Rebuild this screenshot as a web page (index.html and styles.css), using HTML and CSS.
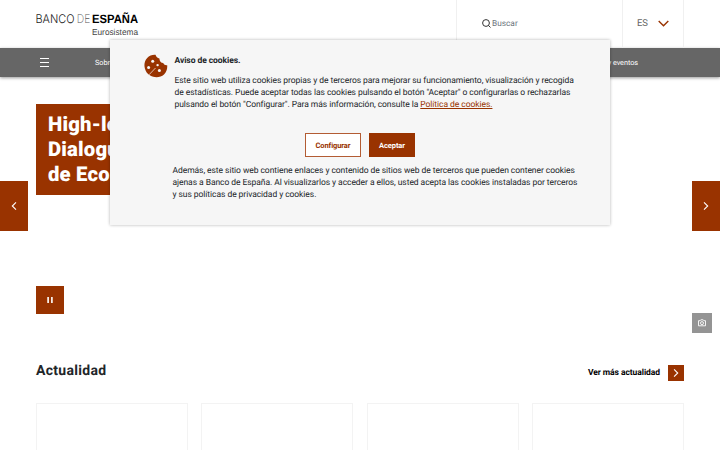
FILE: index.html
```html
<!DOCTYPE html>
<html lang="es">
<head>
    <meta charset="UTF-8">
    <meta name="viewport" content="width=device-width, initial-scale=1.0">
    <title>Banco de España</title>
    <link rel="stylesheet" href="styles.css">
</head>
<body>

<header class="header">
    <a class="logo" href="#">
        <svg width="104" height="26" viewBox="0 0 104 26">
            <text class="logo-light" x="-.5" y="12.7" textLength="39" lengthAdjust="spacingAndGlyphs">BANCO</text>
            <text class="logo-thin" x="40.8" y="12.7" textLength="13.5" lengthAdjust="spacingAndGlyphs">DE</text>
            <text class="logo-bold" x="56" y="12.7" textLength="46" lengthAdjust="spacingAndGlyphs">ESPAÑA</text>
            <text class="logo-sub" x="56" y="24.7" textLength="46" lengthAdjust="spacingAndGlyphs">Eurosistema</text>
        </svg>
    </a>
    <div class="search">
        <svg width="9" height="9" viewBox="0 0 9 9" fill="none" stroke="#333" stroke-width="1">
            <circle cx="4" cy="4" r="3.4"/>
            <path d="M6.4 6.4 8.5 8.5"/>
        </svg>
        <span>Buscar</span>
    </div>
    <div class="lang">
        <span>ES</span>
        <svg width="11" height="7" viewBox="0 0 11 7" fill="none" stroke="#993300" stroke-width="1.4">
            <path d="M.7.9 5.5 5.7 10.3.9"/>
        </svg>
    </div>
</header>

<nav class="nav">
    <button class="menu-button"><i></i><i></i><i></i></button>
    <a href="#">Sobre el Banco</a>
    <a class="last" href="#">Noticias y eventos</a>
</nav>

<main>
    <section class="hero">
        <h1>High-level<br>Dialogue Banco<br>de Economía</h1>
        <button class="arrow prev">
            <svg width="6" height="10" viewBox="0 0 6 10"><path d="M5 1.3 1.3 5 5 8.7"/></svg>
        </button>
        <button class="arrow next">
            <svg width="6" height="10" viewBox="0 0 6 10"><path d="M1 1.3 4.7 5 1 8.7"/></svg>
        </button>
        <button class="pause">
            <svg width="6" height="6" viewBox="0 0 6 6" fill="#fff">
                <path d="M.3 0h1.6v6H.3zM4.1 0h1.6v6H4.1z"/>
            </svg>
        </button>
        <button class="camera">
            <svg width="8" height="8" viewBox="0 0 8 8" fill="none" stroke="#fff" stroke-width=".9">
                <path d="M.5 1.7h1.7L2.8.8h2.4l.6.9h1.7v5.1h-7z"/>
                <circle cx="4" cy="4.1" r="1.5"/>
            </svg>
        </button>
    </section>

    <section class="news">
        <div class="news-head">
            <h2>Actualidad</h2>
            <a class="more" href="#">
                <span>Ver más actualidad</span>
                <b><svg width="6" height="8" viewBox="0 0 6 8"><path d="M1.1.4 4.7 4 1.1 7.6"/></svg></b>
            </a>
        </div>
        <div class="cards">
            <article></article>
            <article></article>
            <article></article>
            <article></article>
        </div>
    </section>
</main>

<div class="cookies">
    <div class="cookies-top">
        <svg class="cookie-icon" width="24" height="24" viewBox="0 0 24 24">
            <path fill="#993300" d="M11.5.8C12.3 3 13.4 4.2 15.4 4.4 15.4 7 17 8.8 19.2 9.1 20 10.8 21.4 11.6 23.2 11.3 23.5 15 22.5 18 20 20.4 16.5 23.7 10.5 24 6.2 21.5 3.5 19.9 1.8 18 .9 14.5-.2 10.5.6 6.8 3.2 4 5.3 1.7 8.5.5 11.5.8z"/>
            <g fill="#f6f6f6">
                <circle cx="8.7" cy="7.3" r="1.5"/>
                <circle cx="4.6" cy="13.6" r="1.5"/>
                <circle cx="13.6" cy="11.1" r="1.2"/>
                <circle cx="15.4" cy="16.5" r="1.5"/>
            </g>
            <path stroke="#f6f6f6" stroke-width=".7" d="M5 20.8 11.5 14"/>
        </svg>
        <div>
            <strong>Aviso de cookies.</strong>
            <p>Este sitio web utiliza cookies propias y de terceros para mejorar su funcionamiento, visualización y recogida<br>
            de estadísticas. Puede aceptar todas las cookies pulsando el botón "Aceptar" o configurarlas o rechazarlas<br>
            pulsando el botón "Configurar". Para más información, consulte la <a href="#">Política de cookies.</a></p>
        </div>
    </div>
    <div class="cookies-buttons">
        <button class="configure">Configurar</button>
        <button class="accept">Aceptar</button>
    </div>
    <p class="cookies-extra">Además, este sitio web contiene enlaces y contenido de sitios web de terceros que pueden contener cookies<br>
    ajenas a Banco de España. Al visualizarlos y acceder a ellos, usted acepta las cookies instaladas por terceros<br>
    y sus políticas de privacidad y cookies.</p>
</div>

</body>
</html>
```
FILE: styles.css
```css
* {
    box-sizing: border-box;
}
body {
    margin: 0;
    height: 450px;
    overflow: hidden;
    background-color: #fff;
    color: #212529;
    font-family: Roboto, sans-serif;
    font-size: 8px;
    text-rendering: geometricPrecision;
}
a {
    color: inherit;
    text-decoration: none;
}
button {
    border: none;
    padding: 0;
    font-family: inherit;
    text-rendering: inherit;
    cursor: pointer;
}
h1, h2, p {
    margin: 0;
}
.header {
    display: flex;
    height: 47.5px;
    padding: 0 36px;
}
.logo {
    flex: 1;
    padding-top: 10px;
}
.logo text {
    font-family: "Liberation Sans", Arial, sans-serif;
    font-size: 12px;
    fill: #222;
}
.logo .logo-light {
    font-family: Inter, sans-serif;
    font-weight: 300;
}
.logo .logo-thin {
    font-family: Inter, sans-serif;
    font-weight: 200;
    fill: #555;
}
.logo .logo-bold {
    font-weight: bold;
    fill: #000;
}
.logo .logo-sub {
    font-size: 8.7px;
    fill: #444;
}
.search {
    display: flex;
    align-items: center;
    gap: 1px;
    width: 166px;
    padding-left: 25px;
    border-left: 1px solid #f0f0f0;
    color: #6c757d;
    font-size: 8.3px;
}
.lang {
    display: flex;
    align-items: center;
    gap: 10px;
    width: 62px;
    padding-left: 14px;
    border-left: 1px solid #f0f0f0;
    border-right: 1px solid #f0f0f0;
    color: #666;
    font-size: 9.5px;
    letter-spacing: -0.2px;
}
.nav {
    display: flex;
    align-items: center;
    height: 29.5px;
    padding: 0 82px 0 40px;
    background-color: #666;
    box-shadow: 0 1px 3px rgba(0, 0, 0, 0.4);
    color: #fff;
    font-size: 7.3px;
    letter-spacing: -0.05px;
}
.nav .last {
    margin-left: auto;
}
.menu-button {
    display: flex;
    flex-direction: column;
    gap: 3px;
    width: 9px;
    margin-right: 46px;
    background: none;
}
.menu-button i {
    height: 1px;
    background-color: #fff;
}
.hero {
    position: relative;
    height: 273px;
    padding: 26.5px 36px 0;
}
.hero h1 {
    width: 240px;
    height: 91px;
    padding: 8px 12px;
    background-color: #993300;
    color: #fff;
    font-size: 20.3px;
    font-weight: 900;
    line-height: 25px;
    letter-spacing: 0.2px;
}
.arrow {
    position: absolute;
    top: 104px;
    width: 28px;
    height: 50px;
    background-color: #993300;
}
.arrow svg, .more svg {
    display: block;
    margin: 0 auto;
    fill: none;
    stroke: #fff;
    stroke-width: 1.1;
}
.prev {
    left: 0;
}
.next {
    right: 0;
}
.pause {
    display: flex;
    justify-content: center;
    align-items: center;
    width: 28px;
    height: 28px;
    margin-top: 91px;
    background-color: #993300;
}
.camera {
    position: absolute;
    right: 8px;
    bottom: 17px;
    display: flex;
    justify-content: center;
    align-items: center;
    width: 20px;
    height: 20px;
    background-color: #949494;
}
.news {
    padding: 0 36px;
}
.news-head {
    display: flex;
    justify-content: space-between;
    height: 53px;
}
.news h2 {
    padding-top: 11.5px;
    font-size: 14px;
    line-height: 18px;
    letter-spacing: 0.3px;
}
.more {
    display: flex;
    align-items: center;
    gap: 8px;
    height: 16px;
    margin-top: 15px;
    color: #000;
    font-size: 8.5px;
    font-weight: bold;
    letter-spacing: -0.07px;
}
.more b {
    width: 16px;
    height: 16px;
    padding-top: 4px;
    background-color: #993300;
}
.cards {
    display: grid;
    grid-template-columns: repeat(4, 1fr);
    gap: 13.3px;
}
.cards article {
    height: 47px;
    border: 1px solid #f3f3f3;
    border-bottom: none;
}
.cookies {
    position: absolute;
    top: 40px;
    left: 110px;
    width: 500px;
    height: 185px;
    padding: 14px 34px 0;
    background-color: #f6f6f6;
    box-shadow: 0 0 3px rgba(0, 0, 0, 0.3);
    font-size: 8.5px;
    line-height: 12px;
    letter-spacing: -0.063px;
    white-space: nowrap;
}
.cookies-top {
    display: flex;
    gap: 6.5px;
}
.cookie-icon {
    flex-shrink: 0;
}
.cookies-top strong {
    display: block;
    margin: 1px 0 8px;
}
.cookies-top a {
    color: #993300;
    text-decoration: underline;
}
.cookies-buttons {
    display: flex;
    justify-content: center;
    gap: 8px;
    margin: 22px 0 8px;
}
.cookies-buttons button {
    height: 24px;
    border: 1px solid #993300;
    font-size: 7.5px;
    font-weight: bold;
    letter-spacing: -0.1px;
}
.cookies-buttons .configure {
    width: 56px;
    border-color: #b35c33;
    background-color: #fff;
    color: #993300;
}
.cookies-buttons .accept {
    width: 46px;
    background-color: #993300;
    color: #fff;
}
.cookies-extra {
    padding-left: 28.5px;
}
```
